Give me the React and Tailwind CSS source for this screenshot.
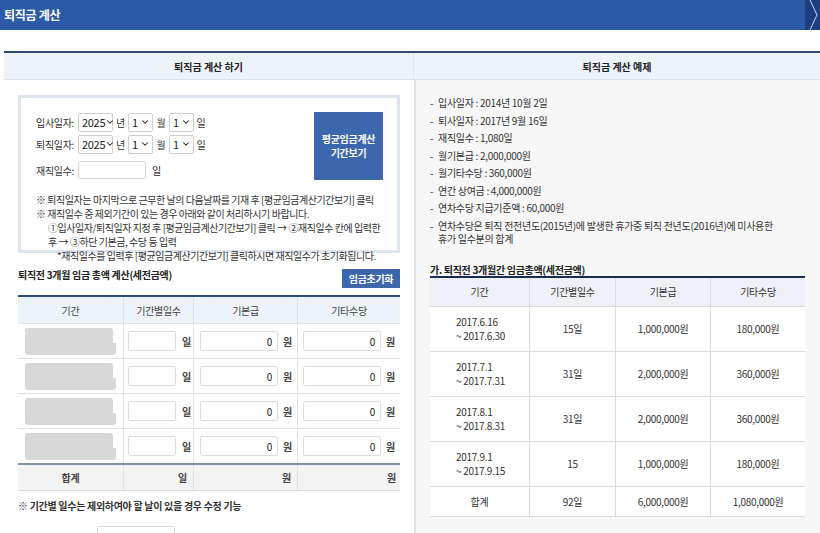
import { ChevronDown } from 'lucide-react';

const leftRows = [1, 2, 3, 4];

const exampleList = [
  '입사일자 : 2014년 10월 2일',
  '퇴사일자 : 2017년 9월 16일',
  '재직일수 : 1,080일',
  '월기본급 : 2,000,000원',
  '월기타수당 : 360,000원',
  '연간 상여금 : 4,000,000원',
  '연차수당 지급기준액 : 60,000원',
];

const exampleRows = [
  ['2017.6.16', '~ 2017.6.30', '15일', '1,000,000원', '180,000원'],
  ['2017.7.1', '~ 2017.7.31', '31일', '2,000,000원', '360,000원'],
  ['2017.8.1', '~ 2017.8.31', '31일', '2,000,000원', '360,000원'],
  ['2017.9.1', '~ 2017.9.15', '15', '1,000,000원', '180,000원'],
];

// 드롭다운 모양 (년/월/일)
function Sel({ value, w }) {
  return (
    <div className={`h-[19px] ${w} border border-[#cfcfcf] rounded-[2px] bg-white flex items-center justify-between pl-[3px] pr-[2px] text-[11px] text-[#222]`}>
      <span>{value}</span>
      <ChevronDown size={10} strokeWidth={2.5} className="shrink-0" />
    </div>
  );
}

function DateRow({ label }) {
  return (
    <div className="flex items-center h-[22px]">
      <span className="w-[42px]">{label}</span>
      <Sel value="2025" w="w-[35px]" />
      <span className="w-[15px] text-center">년</span>
      <Sel value="1" w="w-[25px]" />
      <span className="w-[16px] text-center">월</span>
      <Sel value="1" w="w-[25px]" />
      <span className="w-[14px] text-center">일</span>
    </div>
  );
}

export default function App() {
  return (
    <div className="font-['Noto_Sans_CJK_KR',sans-serif] w-[820px] h-[533px] overflow-hidden bg-white text-[#333]">
      {/* 상단 타이틀 바 */}
      <header className="h-[30px] bg-[#2b5ba7] flex items-center justify-between">
        <h1 className="pl-[4px] text-white font-bold text-[12px] tracking-[-0.3px]">퇴직금 계산</h1>
        <div className="w-[15px] h-full bg-[#1c3f82] flex items-center justify-center">
          <svg width="10" height="30" viewBox="0 0 10 30" fill="none" stroke="#ffffff" strokeWidth="0.8">
            <polyline points="2,0 9,15 2,30" />
          </svg>
        </div>
      </header>

      <div className="mt-[21px] ml-[4px] border-t-2 border-[#2d4c73]">
        <div className="flex h-[27px] bg-[#eef2f9] border-b border-[#dde2ea] text-[10px] font-bold text-[#222]">
          <div className="w-[410px] flex items-center justify-center border-r border-[#dfe3ea]">퇴직금 계산 하기</div>
          <div className="flex-1 flex items-center justify-center">퇴직금 계산 예제</div>
        </div>

        <div className="flex">
          {/* 왼쪽: 계산하기 */}
          <section className="w-[410px] pl-[14px] pt-[15px] text-[10px] tracking-[-0.3px]">
            <div className="w-[382px] h-[158px] border-[3px] border-[#dfe5ef] pl-[15px] pr-[14px] pt-[13px]">
              <div className="flex justify-between items-start">
                <div>
                  <DateRow label="입사일자:" />
                  <DateRow label="퇴직일자:" />
                  <div className="flex items-center h-[22px] mt-[4px]">
                    <span className="w-[42px]">재직일수:</span>
                    <div className="w-[68px] h-[18px] border border-[#d6d6d6] rounded-[2px] bg-white" />
                    <span className="ml-[6px]">일</span>
                  </div>
                </div>
                <button className="mt-[1px] w-[69px] h-[68px] bg-[#3d67ad] text-white font-bold text-[10px] leading-[14px]">
                  평균임금계산
                  <br />
                  기간보기
                </button>
              </div>
              <div className="mt-[12px] leading-[14px] text-[#333] whitespace-nowrap tracking-[-0.45px]">
                <p>※ 퇴직일자는 마지막으로 근무한 날의 다음날짜를 기재 후 [평균임금계산기간보기] 클릭</p>
                <p>※ 재직일수 중 제외기간이 있는 경우 아래와 같이 처리하시기 바랍니다.</p>
                <p className="pl-[12px]">①입사일자/퇴직일자 지정 후 [평균임금계산기간보기] 클릭 → ②재직일수 칸에 입력한</p>
                <p className="pl-[12px]">후 → ③하단 기본금, 수당 등 입력</p>
                <p className="pl-[21px]">*재직일수를 입력후 [평균임금계산기간보기] 클릭하시면 재직일수가 초기화됩니다.</p>
              </div>
            </div>

            <div className="w-[382px] mt-[15px] flex justify-between items-start">
              <h2 className="font-bold leading-[14px] text-[#222]">퇴직전 3개월 임금 총액 계산(세전금액)</h2>
              <button className="mt-[1px] w-[58px] h-[19px] bg-[#3d67ad] text-white font-bold text-[10px]">임금초기화</button>
            </div>

            <div className="w-[382px] mt-[7px] border-t-2 border-[#2d4c73] text-[#444]">
              <div className="grid grid-cols-[106px_70px_104px_102px] h-[27px] bg-[#eef2f9] border-b border-[#e2e2e2]">
                <div className="flex items-center justify-center border-r border-[#e2e2e2]">기간</div>
                <div className="flex items-center justify-center border-r border-[#e2e2e2]">기간별일수</div>
                <div className="flex items-center justify-center border-r border-[#e2e2e2]">기본급</div>
                <div className="flex items-center justify-center">기타수당</div>
              </div>
              {leftRows.map((r) => (
                <div key={r} className="grid grid-cols-[106px_70px_104px_102px] h-[35px] border-b border-[#e2e2e2]">
                  <div className="flex flex-col justify-center pl-[7px] border-r border-[#e2e2e2]">
                    <div className="w-[88px] h-[15px] bg-[#d8d8d8] rounded-t-[3px]" />
                    <div className="w-[91px] h-[12px] bg-[#d8d8d8] rounded-b-[3px]" />
                  </div>
                  <div className="flex items-center pl-[4px] border-r border-[#e2e2e2]">
                    <div className="w-[48px] h-[20px] border border-[#dcdcdc] rounded-[2px] bg-white" />
                    <span className="ml-[6px] font-bold">일</span>
                  </div>
                  <div className="flex items-center pl-[6px] border-r border-[#e2e2e2]">
                    <div className="w-[78px] h-[20px] border border-[#dcdcdc] rounded-[2px] bg-white flex items-center justify-end pr-[5px] text-[#222]">0</div>
                    <span className="ml-[5px] font-bold">원</span>
                  </div>
                  <div className="flex items-center pl-[5px]">
                    <div className="w-[78px] h-[20px] border border-[#dcdcdc] rounded-[2px] bg-white flex items-center justify-end pr-[5px] text-[#222]">0</div>
                    <span className="ml-[5px] font-bold">원</span>
                  </div>
                </div>
              ))}
              <div className="grid grid-cols-[106px_70px_104px_102px] h-[28px] bg-[#f3f3f3] border-t-2 border-[#7e93ab] border-b border-b-[#dcdcdc] font-bold -mt-px">
                <div className="flex items-center justify-center border-r border-[#e2e2e2]">합계</div>
                <div className="flex items-center justify-end pr-[6px] border-r border-[#e2e2e2]">일</div>
                <div className="flex items-center justify-end pr-[6px] border-r border-[#e2e2e2]">원</div>
                <div className="flex items-center justify-end pr-[4px]">원</div>
              </div>
            </div>

            <p className="mt-[8px] leading-[14px] font-bold text-[#333]">※ 기간별 일수는 제외하여야 할 날이 있을 경우 수정 기능</p>
            <div className="mt-[13px] ml-[79px] w-[78px] h-[20px] border border-[#d6d6d6] rounded-[3px]" />
          </section>

          {/* 오른쪽: 계산 예제 */}
          <section className="flex-1 h-[460px] bg-[#f7f7f7] border-l-2 border-[#e2e2e2] pl-[14px] pt-[14px] text-[10px] tracking-[-0.3px]">
            <ul className="leading-[13.5px]">
              {exampleList.map((t) => (
                <li key={t} className="flex py-[2px]">
                  <span className="w-[8px]">-</span>
                  <span>{t}</span>
                </li>
              ))}
              <li className="flex py-[2px]">
                <span className="w-[8px] shrink-0">-</span>
                <span>
                  연차수당은 퇴직 전전년도(2015년)에 발생한 휴가중 퇴직 전년도(2016년)에 미사용한
                  <br />
                  휴가 일수분의 합계
                </span>
              </li>
            </ul>

            <h3 className="mt-[16px] w-[375px] font-bold leading-[12px] text-[#222] border-b-2 border-[#1b2b57]">가. 퇴직전 3개월간 임금총액(세전금액)</h3>
            <div className="w-[375px] bg-white text-[#333]">
              <div className="grid grid-cols-[100px_86px_95px_94px] h-[29px] bg-[#eef1f6] border-b border-[#dcdcdc]">
                <div className="flex items-center justify-center border-r border-[#dcdcdc]">기간</div>
                <div className="flex items-center justify-center border-r border-[#dcdcdc]">기간별일수</div>
                <div className="flex items-center justify-center border-r border-[#dcdcdc]">기본급</div>
                <div className="flex items-center justify-center">기타수당</div>
              </div>
              {exampleRows.map((r) => (
                <div key={r[0]} className="grid grid-cols-[100px_86px_95px_94px] h-[45px] border-b border-[#dcdcdc]">
                  <div className="flex flex-col justify-center pl-[26px] leading-[14px] border-r border-[#dcdcdc]">
                    <span>{r[0]}</span>
                    <span>{r[1]}</span>
                  </div>
                  <div className="flex items-center justify-center border-r border-[#dcdcdc]">{r[2]}</div>
                  <div className="flex items-center justify-center border-r border-[#dcdcdc]">{r[3]}</div>
                  <div className="flex items-center justify-center">{r[4]}</div>
                </div>
              ))}
              <div className="grid grid-cols-[100px_86px_95px_94px] h-[30px] border-b border-[#dcdcdc]">
                <div className="flex items-center justify-center border-r border-[#dcdcdc]">합계</div>
                <div className="flex items-center justify-center border-r border-[#dcdcdc]">92일</div>
                <div className="flex items-center justify-center border-r border-[#dcdcdc]">6,000,000원</div>
                <div className="flex items-center justify-center">1,080,000원</div>
              </div>
            </div>
          </section>
        </div>
      </div>
    </div>
  );
}
